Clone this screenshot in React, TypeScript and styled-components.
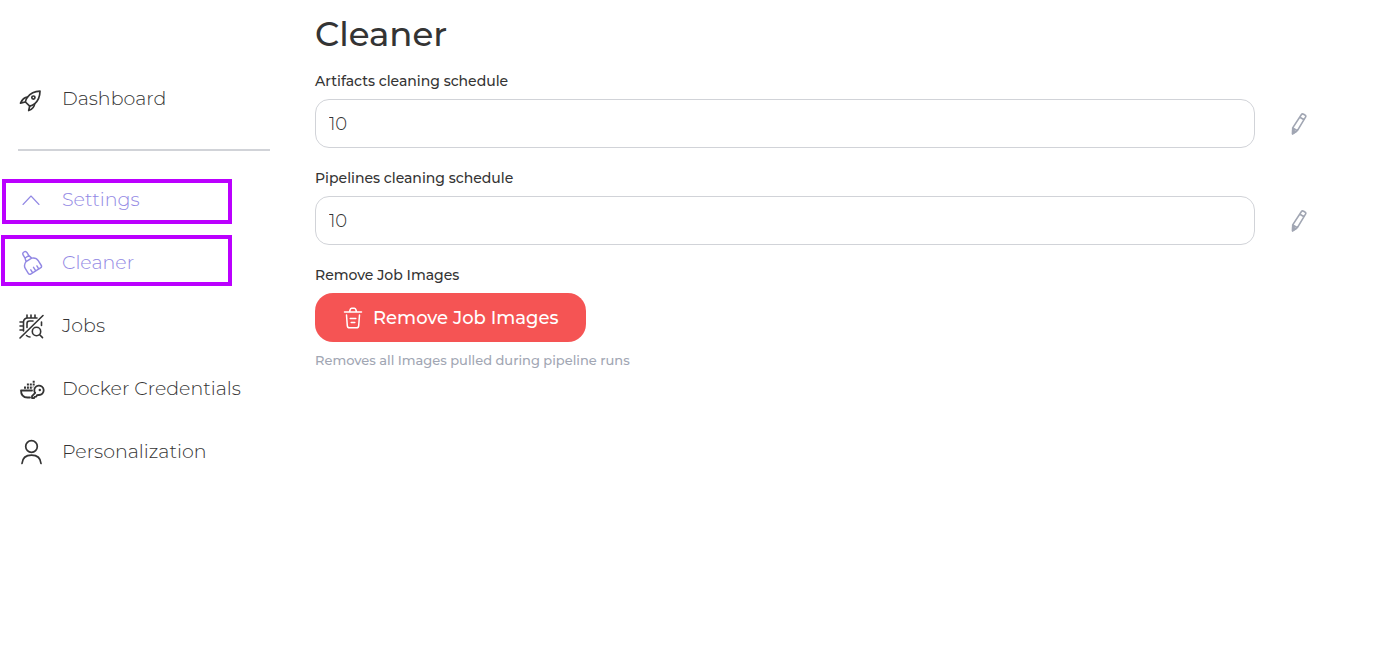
import React, { useState } from "react";
import styled, { createGlobalStyle, css } from "styled-components";

const colors = {
  text: "#343434",
  accent: "#9288e4",
  line: "#d1d3d8",
  muted: "#a1a6b3",
  danger: "#f55454",
  marker: "#bb00ff",
};

const GlobalStyle = createGlobalStyle`
  * { box-sizing: border-box; }
  body {
    margin: 0;
    background: #ffffff;
    color: ${colors.text};
    font-family: Montserrat, Inter, "Liberation Sans", sans-serif;
  }
`;

const Page = styled.div`
  display: flex;
  align-items: flex-start;
  min-height: 100vh;
`;

const Sidebar = styled.nav`
  flex: 0 0 270px;
  padding-top: 67px;
`;

const Divider = styled.hr`
  height: 2px;
  margin: 19px 0 17px 18px;
  border: 0;
  background: ${colors.line};
`;

const NavLink = styled.a<{ $active?: boolean }>`
  position: relative;
  display: flex;
  align-items: center;
  gap: 16px;
  height: 63px;
  padding-left: 18px;
  color: ${(p) => (p.$active ? colors.accent : colors.text)};
  font-size: 19px;
  font-weight: 300;
  line-height: 24px;
  text-decoration: none;

  svg {
    flex: none;
  }
`;

const Marker = styled.span<{ $tall?: boolean }>`
  position: absolute;
  border: 4px solid ${colors.marker};
  pointer-events: none;
  ${(p) =>
    p.$tall
      ? css`inset: 4px 38px 8px 1px;`
      : css`inset: 11px 38px 7px 2px;`}
`;

const Main = styled.main`
  flex: 1;
  min-width: 0;
  padding: 0 47px 0 45px;
`;

const Title = styled.h1`
  margin: 0;
  padding: 12px 0 15px;
  font-size: 34px;
  font-weight: 500;
  line-height: 44px;
`;

const Field = styled.div`
  margin-bottom: 20px;
`;

const labelText = css`
  display: block;
  margin: 0 0 8px;
  font-size: 14px;
  font-weight: 500;
  line-height: 20px;
`;

const Label = styled.label`
  ${labelText}
`;

const Caption = styled.p`
  ${labelText}
`;

const InputRow = styled.div`
  display: flex;
  align-items: center;
`;

const TextInput = styled.input`
  flex: 1;
  min-width: 0;
  height: 49px;
  padding: 0 13px;
  border: 1px solid ${colors.line};
  border-radius: 14px;
  background: #ffffff;
  color: ${colors.text};
  font: inherit;
  font-size: 18px;
  font-weight: 300;
`;

const EditButton = styled.button`
  display: grid;
  place-items: center;
  width: 88px;
  height: 49px;
  padding: 0;
  border: 0;
  background: none;
  color: ${colors.muted};
  cursor: pointer;
`;

const DangerButton = styled.button`
  display: flex;
  align-items: center;
  gap: 9px;
  height: 49px;
  padding: 0 27px;
  border: 0;
  border-radius: 18px;
  background: ${colors.danger};
  color: #ffffff;
  font: inherit;
  font-size: 18px;
  font-weight: 500;
  cursor: pointer;
`;

const Hint = styled.p`
  margin: 8px 0 0;
  color: ${colors.muted};
  font-size: 13px;
  font-weight: 500;
  line-height: 20px;
`;

const Icon = ({ width = 28, height = 28, stroke = 1.7, children }: {
  width?: number; height?: number; stroke?: number; children: React.ReactNode;
}) => (
  <svg width={width} height={height} viewBox={`0 0 ${width} ${height}`} fill="none" stroke="currentColor"
    strokeWidth={stroke} strokeLinecap="round" strokeLinejoin="round" aria-hidden="true">
    {children}
  </svg>
);

const RocketIcon = () => (
  <Icon>
    <path d="M22 6.200C16.500 6.400 12.200 8.600 9.400 12.200c-1.200 1.600-1.800 3.100-2 4.800l4.300 4.100c1.800-.3 3.500-1.100 4.900-2.300C20 15.900 21.900 11.600 22 6.200Z" />
    <circle cx="15.400" cy="12.600" r="1.600" />
    <path d="M9.400 12.200c-3 .2-5 1.800-6.900 6l4.900-1.200M16.600 18.800c-.2 3.200-1.800 5.200-5.900 6.700l1-4.400" />
  </Icon>
);

const ChevronIcon = () => (
  <Icon stroke={1.1}>
    <path d="m5 18.500 8-8.500 8 8.500" />
  </Icon>
);

const BroomIcon = () => (
  <Icon stroke={1.6}>
    <g transform="translate(-1.500 -.5) rotate(-32 14 14) translate(1.400 1) scale(.9)">
      <path d="M11.500 7V3.200a2.500 2.500 0 0 1 5 0V7M11.500 7h5l1.200 4h-7.400ZM10.300 11c-2.900 1.100-4.700 3.500-4.700 6.200v6.100c0 1.400.9 2.200 2.200 2.200h12.400c1.300 0 2.200-.8 2.200-2.200v-6.100c0-2.700-1.800-5.100-4.700-6.200M10 25.500v-4M14 25.500v-4.700M18 25.500v-4" />
    </g>
  </Icon>
);

const JobsIcon = () => (
  <Icon stroke={1.6}>
    <path d="M2 26 25 3.500" />
    <path d="M5.500 19V10a4 4 0 0 1 4-4h9.500M9 15.500v-4A2.500 2.500 0 0 1 11.500 9H15M9 6V3M13 6V3M17 6V3M5.500 10H2M5.500 14H2M5.500 18H2M23.500 10v3.500M8.500 23.500c1 .9 2 1.500 3.500 1.500" />
    <circle cx="18.500" cy="19.500" r="4.200" />
    <path d="m21.700 22.800 2.800 2.800" />
  </Icon>
);

const DockerIcon = () => (
  <Icon stroke={1.8}>
    <path d="M12 22.500H9.500C5.500 22.500 3 20 3 15.500h11" />
    <path d="M16.400 16.300a4.700 4.700 0 1 1 4.500 3.700l-1.900.2-.7 1.500-1.700.1-.6 1.300h-2v-2l3.200-3.200c-.4-.5-.7-1-.8-1.600Z" />
    <g fill="currentColor" stroke="none">
      <circle cx="21.800" cy="15" r="1.200" />
      <path d="M6 11.500h2v2.200H6zM8.900 11.500h2v2.200h-2zM11.800 11.500h2v2.200h-2zM8.900 8.600h2v2h-2zM11.800 8.600h2v2h-2zM14.700 8.600h2v2h-2zM14.700 5.700h2v2h-2zM14.700 11.500h1.100l-1.100 1.800z" />
    </g>
  </Icon>
);

const PersonIcon = () => (
  <Icon>
    <circle cx="13.500" cy="8.500" r="5.800" />
    <path d="M4 25.500c.4-5.200 4-8.400 9.500-8.400s9.100 3.200 9.500 8.400" />
  </Icon>
);

const PencilIcon = () => (
  <Icon width={16} height={22} stroke={1.6}>
    <path d="M10.300 1.800c.5-.9 1.400-1.100 2.300-.6l1.300.8c.9.500 1.100 1.300.6 2.200L6.400 17.700l-4.800 3.200.1-6ZM8.900 4.200l4.200 2.500M1.700 14.900l4.700 2.800" />
    <path d="m1.600 20.900.1-4 3.200 1.900Z" fill="currentColor" />
  </Icon>
);

const TrashIcon = () => (
  <Icon width={22} height={24} stroke={1.5}>
    <path d="M2.500 6h17M7.500 5.800l.8-2.600c.2-.6.700-1 1.300-1h2.800c.6 0 1.100.4 1.300 1l.8 2.600M4.500 9l.8 10.600c.1 1.300.9 2.200 2.200 2.200h7c1.300 0 2.100-.9 2.200-2.200L17.500 9M8.200 12.500h5.600M9.200 16.500h3.600" />
  </Icon>
);

const ScheduleField = ({ id, label }: { id: string; label: string }) => {
  const [value, setValue] = useState("10");
  return (
    <Field>
      <Label htmlFor={id}>{label}</Label>
      <InputRow>
        <TextInput id={id} value={value} onChange={(e) => setValue(e.target.value)} />
        <EditButton type="button" aria-label={`Edit ${label}`}>
          <PencilIcon />
        </EditButton>
      </InputRow>
    </Field>
  );
};

export default function App() {
  return (
    <>
      <GlobalStyle />
      <Page>
        <Sidebar>
          <NavLink href="#dashboard"><RocketIcon />Dashboard</NavLink>
          <Divider />
          <NavLink href="#settings" $active><ChevronIcon />Settings<Marker /></NavLink>
          <NavLink href="#cleaner" $active><BroomIcon />Cleaner<Marker $tall /></NavLink>
          <NavLink href="#jobs"><JobsIcon />Jobs</NavLink>
          <NavLink href="#docker"><DockerIcon />Docker Credentials</NavLink>
          <NavLink href="#personalization"><PersonIcon />Personalization</NavLink>
        </Sidebar>
        <Main>
          <Title>Cleaner</Title>
          <ScheduleField id="artifacts" label="Artifacts cleaning schedule" />
          <ScheduleField id="pipelines" label="Pipelines cleaning schedule" />
          <Caption>Remove Job Images</Caption>
          <DangerButton type="button"><TrashIcon />Remove Job Images</DangerButton>
          <Hint>Removes all Images pulled during pipeline runs</Hint>
        </Main>
      </Page>
    </>
  );
}
